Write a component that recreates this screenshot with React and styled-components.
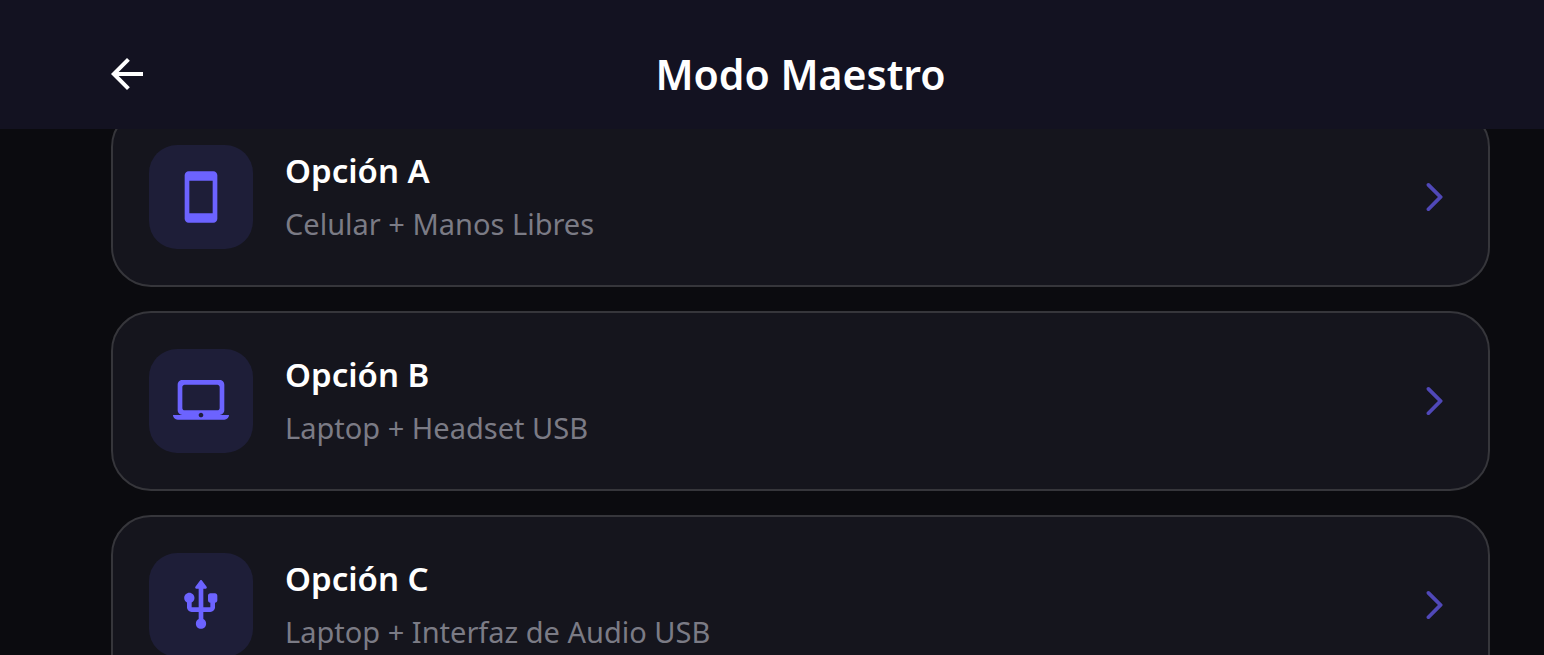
import styled, { createGlobalStyle } from "styled-components";

const GlobalStyle = createGlobalStyle`
  * {
    box-sizing: border-box;
  }
  body {
    margin: 0;
    background-color: #0b0b0f;
    font-family: "Noto Sans", "Open Sans", sans-serif;
  }
`;

const Screen = styled.div`
  display: flex;
  flex-direction: column;
  height: 100vh;
  overflow: hidden;
`;

const AppBar = styled.header`
  display: grid;
  grid-template-columns: 48px 1fr 48px;
  align-items: center;
  flex-shrink: 0;
  height: 129px;
  padding: 18px 46px 0 103px;
  background-color: #131221;
  z-index: 1;
`;

const BackButton = styled.button`
  display: flex;
  padding: 0;
  border: 0;
  background: none;
  color: #ffffff;
  cursor: pointer;
`;

const Title = styled.h1`
  margin: 0;
  color: #ffffff;
  font-size: 41px;
  font-weight: 600;
  line-height: 48px;
  text-align: center;
`;

/* the list is scrolled a little way under the app bar */
const OptionList = styled.main`
  display: flex;
  flex-direction: column;
  gap: 24px;
  margin-top: -22px;
  padding: 0 54px 24px 111px;
`;

const OptionCard = styled.button`
  display: flex;
  align-items: center;
  gap: 32px;
  flex-shrink: 0;
  width: 100%;
  padding: 36px;
  border: 2px solid #36363b;
  border-radius: 40px;
  background-color: #15151d;
  font-family: inherit;
  text-align: left;
  cursor: pointer;
`;

const IconBox = styled.span`
  display: flex;
  align-items: center;
  justify-content: center;
  width: 104px;
  height: 104px;
  border-radius: 28px;
  background-color: #1e1e38;
  color: #6c63ff;
`;

const OptionText = styled.span`
  display: flex;
  flex-direction: column;
  flex: 1;
  gap: 8px;
`;

const OptionName = styled.span`
  color: #ffffff;
  font-size: 33px;
  font-weight: 600;
  line-height: 46px;
`;

const OptionDetail = styled.span`
  color: #7b7b85;
  font-size: 29px;
  line-height: 44px;
`;

const Icon = styled.svg`
  display: block;
  width: ${(props) => props.$size}px;
  height: ${(props) => props.$size}px;
  fill: currentColor;
`;

const Chevron = styled(Icon)`
  color: #5048b8;
`;

const icons = {
  back: "M20 11H7.83l5.59-5.59L12 4l-8 8 8 8 1.41-1.41L7.83 13H20v-2z",
  phone:
    "M17.3 1H6.7C5.76 1 5 1.76 5 2.7v18.6c0 .94.76 1.7 1.7 1.7h10.6c.94 0 1.7-.76 1.7-1.7V2.7c0-.94-.76-1.7-1.7-1.7zM17 19H7V5h10v14z",
  laptop:
    "M20 18c1.1 0 1.99-.9 1.99-2L22 5c0-1.1-.9-2-2-2H4c-1.1 0-2 .9-2 2v11c0 1.1.9 2 2 2H0c0 1.1.9 2 2 2h20c1.1 0 2-.9 2-2h-4zM5 5h14c.55 0 1 .45 1 1v9c0 .55-.45 1-1 1H5c-.55 0-1-.45-1-1V6c0-.55.45-1 1-1zm7 14c-.55 0-1-.45-1-1s.45-1 1-1 1 .45 1 1-.45 1-1 1z",
  usb: "M15 8v2c0 .55.45 1 1 1v2h-3V5h1c.41 0 .65-.47.4-.8l-2-2.67c-.2-.27-.6-.27-.8 0L9.6 4.2c-.25.33-.01.8.4.8h1v8H8v-2.07c.7-.37 1.2-1.08 1.2-1.93 0-1.21-.99-2.2-2.2-2.2S4.8 7.79 4.8 9c0 .85.5 1.56 1.2 1.93V13c0 1.11.89 2 2 2h3v3.05c-.71.37-1.2 1.1-1.2 1.95 0 1.22.99 2.2 2.2 2.2s2.2-.98 2.2-2.2c0-.85-.49-1.58-1.2-1.95V15h3c1.11 0 2-.89 2-2v-2c.55 0 1-.45 1-1V8c0-.55-.45-1-1-1h-2c-.55 0-1 .45-1 1z",
  chevron:
    "M7.38 21.01c.49.49 1.28.49 1.77 0l8.31-8.31c.39-.39.39-1.02 0-1.41L9.15 2.98c-.49-.49-1.28-.49-1.77 0s-.49 1.28 0 1.77L14.62 12l-7.25 7.25c-.48.48-.48 1.28.01 1.76z",
};

const options = [
  { name: "Opción A", detail: "Celular + Manos Libres", icon: "phone" },
  { name: "Opción B", detail: "Laptop + Headset USB", icon: "laptop" },
  { name: "Opción C", detail: "Laptop + Interfaz de Audio USB", icon: "usb" },
];

function Option({ name, detail, icon }) {
  return (
    <OptionCard type="button">
      <IconBox>
        <Icon $size={56} viewBox="0 0 24 24" aria-hidden="true">
          <path d={icons[icon]} />
        </Icon>
      </IconBox>
      <OptionText>
        <OptionName>{name}</OptionName>
        <OptionDetail>{detail}</OptionDetail>
      </OptionText>
      <Chevron $size={36} viewBox="0 0 24 24" aria-hidden="true">
        <path d={icons.chevron} />
      </Chevron>
    </OptionCard>
  );
}

export default function App() {
  return (
    <Screen>
      <GlobalStyle />
      <AppBar>
        <BackButton type="button" aria-label="Volver">
          <Icon $size={48} viewBox="0 0 24 24" aria-hidden="true">
            <path d={icons.back} />
          </Icon>
        </BackButton>
        <Title>Modo Maestro</Title>
      </AppBar>
      <OptionList>
        {options.map((option) => (
          <Option key={option.name} {...option} />
        ))}
      </OptionList>
    </Screen>
  );
}
